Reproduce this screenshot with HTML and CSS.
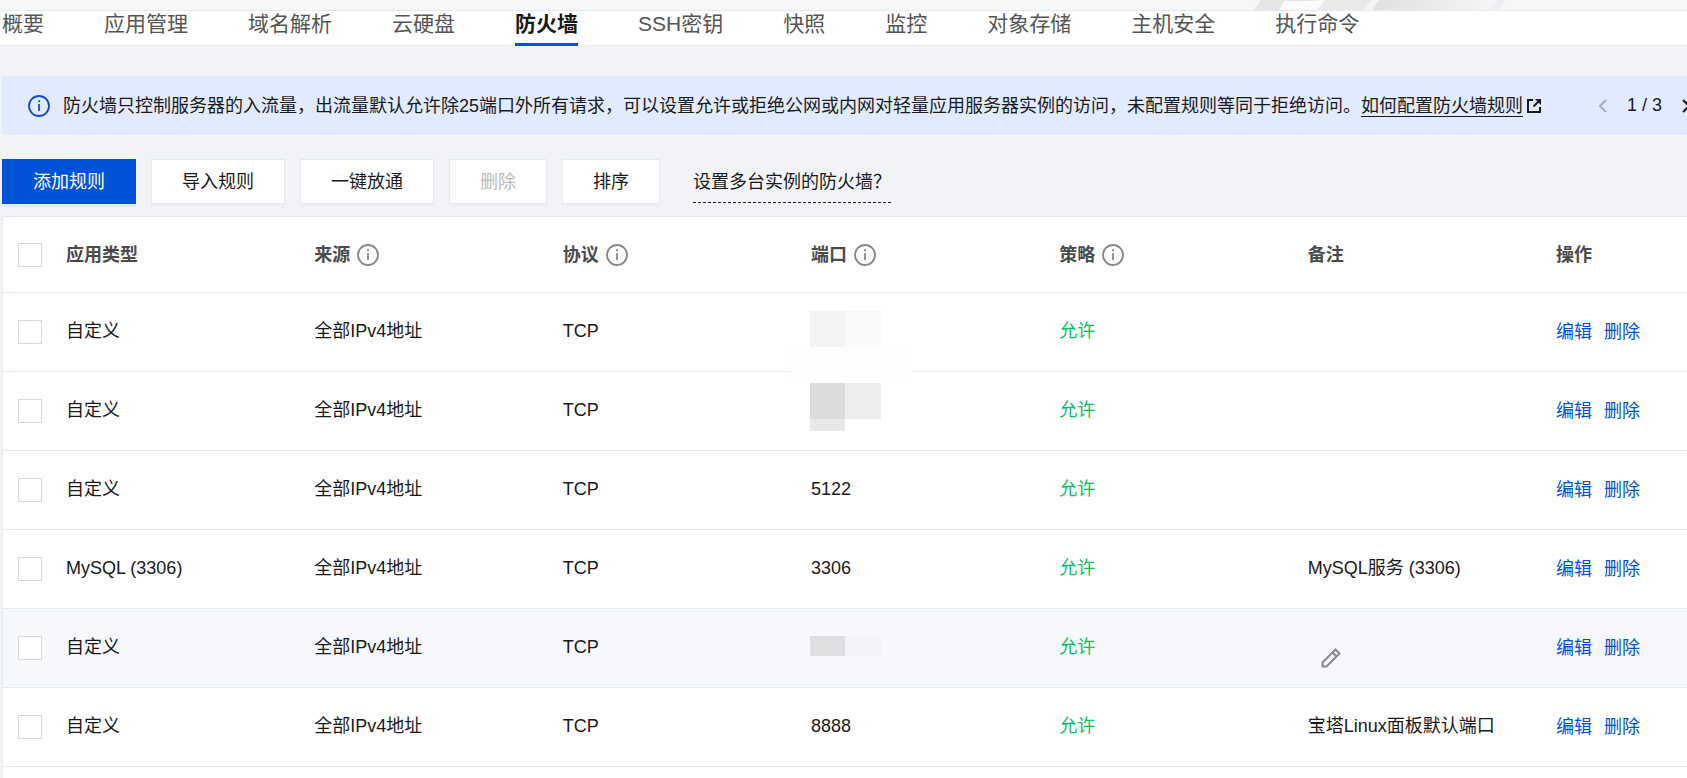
FILE: index.html
```html
<!DOCTYPE html>
<html lang="zh-CN">
<head>
  <meta charset="UTF-8">
  <title>防火墙</title>
  <link rel="stylesheet" href="styles.css">
</head>
<body>

  <svg class="sprite" aria-hidden="true">
    <symbol id="icon-info" viewBox="0 0 22 22">
      <circle cx="11" cy="11" r="10" fill="none" stroke="currentColor" stroke-width="1.8"/>
      <path d="M11 9v7M11 5.2v2" fill="none" stroke="currentColor" stroke-width="1.8"/>
    </symbol>
  </svg>

  <div class="banner">
    <svg class="banner-art" viewBox="0 0 607 10" preserveAspectRatio="none" aria-hidden="true">
      <defs>
        <linearGradient id="fade">
          <stop offset="0" stop-color="#dfe0e2"/>
          <stop offset="1" stop-color="#f5f6f8"/>
        </linearGradient>
      </defs>
      <path d="M181 0h62l-7 10h-62z" fill="#e4e5e7"/>
      <path d="M204 1h20l20-1-6 10h-39z" fill="#fbfbfd"/>
      <path d="M245 0h47l-8 10h-47z" fill="#e9eaec"/>
      <path d="M292 0h7l-7 10h-8z" fill="#f4f5f7"/>
      <path d="M299 0h120l-8 10H292z" fill="url(#fade)"/>
      <path d="M418 0h8l-8 10h-8z" fill="#eeeff2"/>
    </svg>
  </div>

  <nav class="tabs">
    <a class="tab" href="#">概要</a>
    <a class="tab" href="#">应用管理</a>
    <a class="tab" href="#">域名解析</a>
    <a class="tab" href="#">云硬盘</a>
    <a class="tab active" href="#">防火墙</a>
    <a class="tab" href="#">SSH密钥</a>
    <a class="tab" href="#">快照</a>
    <a class="tab" href="#">监控</a>
    <a class="tab" href="#">对象存储</a>
    <a class="tab" href="#">主机安全</a>
    <a class="tab" href="#">执行命令</a>
  </nav>

  <main class="content">
    <!-- Notice -->
    <div class="notice">
      <svg class="icon notice-icon"><use href="#icon-info"/></svg>
      <p class="notice-text">防火墙只控制服务器的入流量，出流量默认允许除25端口外所有请求，可以设置允许或拒绝公网或内网对轻量应用服务器实例的访问，未配置规则等同于拒绝访问。<a class="notice-link" href="#">如何配置防火墙规则</a><svg class="ext-icon" viewBox="0 0 15 15"><path d="M6 2H1v12h12V9" fill="none" stroke="currentColor" stroke-width="2"/><path d="M13 2L6.500 8.500" fill="none" stroke="currentColor" stroke-width="2"/><path d="M8 1h6v6z" fill="currentColor"/></svg></p>
      <div class="pager">
        <button class="pager-btn" aria-label="上一条" disabled><svg viewBox="0 0 8 14"><path d="M7 1L1 7l6 6" fill="none" stroke="currentColor" stroke-width="2"/></svg></button>
        <span>1 / 3</span>
        <button class="pager-btn" aria-label="下一条"><svg viewBox="0 0 8 14"><path d="M1 1l6 6-6 6" fill="none" stroke="currentColor" stroke-width="2"/></svg></button>
      </div>
    </div>

    <!-- Toolbar -->
    <div class="toolbar">
      <button class="btn primary">添加规则</button>
      <button class="btn">导入规则</button>
      <button class="btn">一键放通</button>
      <button class="btn" disabled>删除</button>
      <button class="btn">排序</button>
      <a class="tip-link" href="#">设置多台实例的防火墙？</a>
    </div>

    <!-- Rules -->
    <table class="rules">
      <colgroup>
        <col class="col-check"><col><col><col><col><col><col><col class="col-ops">
      </colgroup>
      <thead>
        <tr>
          <th class="check"><input type="checkbox" aria-label="全选"></th>
          <th>应用类型</th>
          <th>来源<svg class="icon th-icon"><use href="#icon-info"/></svg></th>
          <th>协议<svg class="icon th-icon"><use href="#icon-info"/></svg></th>
          <th>端口<svg class="icon th-icon"><use href="#icon-info"/></svg></th>
          <th>策略<svg class="icon th-icon"><use href="#icon-info"/></svg></th>
          <th>备注</th>
          <th>操作</th>
        </tr>
      </thead>
      <tbody>
        <tr>
          <td class="check"><input type="checkbox" aria-label="选择规则"></td>
          <td>自定义</td>
          <td>全部IPv4地址</td>
          <td>TCP</td>
          <td class="masked">
            <svg class="mask mask-tall" viewBox="0 0 120 120" aria-hidden="true">
              <path d="M0 36h120v36H0z" fill="#fefefe"/>
              <path d="M19 0h35v36H19z" fill="#f3f3f3"/>
              <path d="M54 0h36v36H54z" fill="#f9f9f9"/>
              <path d="M19 72h35v36H19z" fill="#dbdbdb"/>
              <path d="M54 72h36v36H54z" fill="#ecedef"/>
              <path d="M19 108h35v12H19z" fill="#e8e8e8"/>
            </svg>
          </td>
          <td class="allow">允许</td>
          <td></td>
          <td class="ops"><a href="#">编辑</a><a href="#">删除</a></td>
        </tr>
        <tr>
          <td class="check"><input type="checkbox" aria-label="选择规则"></td>
          <td>自定义</td>
          <td>全部IPv4地址</td>
          <td>TCP</td>
          <td></td>
          <td class="allow">允许</td>
          <td></td>
          <td class="ops"><a href="#">编辑</a><a href="#">删除</a></td>
        </tr>
        <tr>
          <td class="check"><input type="checkbox" aria-label="选择规则"></td>
          <td>自定义</td>
          <td>全部IPv4地址</td>
          <td>TCP</td>
          <td>5122</td>
          <td class="allow">允许</td>
          <td></td>
          <td class="ops"><a href="#">编辑</a><a href="#">删除</a></td>
        </tr>
        <tr>
          <td class="check"><input type="checkbox" aria-label="选择规则"></td>
          <td>MySQL (3306)</td>
          <td>全部IPv4地址</td>
          <td>TCP</td>
          <td>3306</td>
          <td class="allow">允许</td>
          <td>MySQL服务 (3306)</td>
          <td class="ops"><a href="#">编辑</a><a href="#">删除</a></td>
        </tr>
        <tr class="hovered">
          <td class="check"><input type="checkbox" aria-label="选择规则"></td>
          <td>自定义</td>
          <td>全部IPv4地址</td>
          <td>TCP</td>
          <td class="masked">
            <svg class="mask mask-short" viewBox="0 0 120 20" aria-hidden="true">
              <path d="M19 0h35v20H19z" fill="#dedfe1"/>
              <path d="M54 0h36v20H54z" fill="#f3f4f8"/>
            </svg>
          </td>
          <td class="allow">允许</td>
          <td><button class="edit-btn" aria-label="编辑备注"><svg viewBox="0 0 20 20"><path d="M1.500 18.500v-4L14.500 1.500l4 4L5.500 18.500zM11.500 4.500l4 4" fill="none" stroke="currentColor" stroke-width="2"/></svg></button></td>
          <td class="ops"><a href="#">编辑</a><a href="#">删除</a></td>
        </tr>
        <tr>
          <td class="check"><input type="checkbox" aria-label="选择规则"></td>
          <td>自定义</td>
          <td>全部IPv4地址</td>
          <td>TCP</td>
          <td>8888</td>
          <td class="allow">允许</td>
          <td>宝塔Linux面板默认端口</td>
          <td class="ops"><a href="#">编辑</a><a href="#">删除</a></td>
        </tr>
      </tbody>
      <tfoot>
        <tr><td class="rules-end" colspan="8"></td></tr>
      </tfoot>
    </table>
  </main>

</body>
</html>
```
FILE: styles.css
```css
* {
  box-sizing: border-box;
}
body {
  margin: 0;
  overflow-x: hidden;
  background: #f2f3f7;
  color: #1a1a1a;
  font: 18px/27px "Liberation Sans", "Noto Sans CJK SC", sans-serif;
}
a {
  color: inherit;
  text-decoration: none;
}
button {
  font: inherit;
  color: inherit;
}
.sprite {
  display: none;
}
.icon {
  width: 22px;
  height: 22px;
}

.banner {
  height: 10px;
  padding-left: 64%;
  background: #f6f7f9;
}
.banner-art {
  display: block;
  width: 100%;
  height: 10px;
}
.tabs {
  display: flex;
  gap: 60px;
  height: 36px;
  padding-left: 2px;
  border-top: 1px solid #e7e8ec;
  border-bottom: 1px solid #e7e8ec;
  background: #fff;
}
.tab {
  height: 35px;
  font-size: 21px;
  line-height: 25px;
  white-space: nowrap;
  color: #555;
}
.tab.active {
  font-weight: bold;
  color: #1a1a1a;
  border-bottom: 3px solid #0052d9;
}

.content {
  padding: 30px 0 0 2px;
}
.notice {
  display: flex;
  align-items: center;
  height: 59px;
  padding-left: 26px;
  background: #e1eaff;
}
.notice-icon {
  flex: none;
  color: #1a4ac8;
}
.notice-text {
  flex: 1;
  margin: 0 0 0 13px;
  padding-top: 2px;
  white-space: nowrap;
}
.notice-link {
  border-bottom: 1px solid #1a1a1a;
}
.ext-icon {
  width: 15px;
  height: 15px;
  margin-left: 4px;
  vertical-align: -1px;
}
.pager {
  display: flex;
  align-items: center;
  gap: 20px;
  margin-right: -3px;
}
.pager-btn {
  padding: 0;
  border: 0;
  background: none;
}
.pager-btn:disabled {
  color: #a8aebc;
}
.pager-btn svg {
  display: block;
  width: 8px;
  height: 14px;
}

.toolbar {
  display: flex;
  gap: 15px;
  margin: 24px 0 12px;
}
.btn {
  height: 45px;
  padding: 2px 30px 0;
  border: 1px solid #e5e8ef;
  background: #fff;
  box-shadow: 0 3px 0 #edeff3;
}
.btn.primary {
  border-color: #0052d9;
  background: #0052d9;
  color: #fff;
  box-shadow: 0 3px 0 #e2eaf5;
}
.btn:disabled {
  color: #bbb;
}
.tip-link {
  height: 44px;
  margin-left: 18px;
  line-height: 46px;
  border-bottom: 1px dashed #1a1a1a;
}

.rules {
  width: 100%;
  table-layout: fixed;
  border-collapse: separate;
  border-spacing: 0;
  border: 1px solid #e5e8ef;
  border-width: 1px 0 0 1px;
  background: #fff;
}
.col-check {
  width: 48px;
}
.col-ops {
  width: 146px;
}
.rules th,
.rules td {
  height: 79px;
  padding: 0 0 1px 15px;
  border-bottom: 1px solid #e5e8ef;
  text-align: left;
  white-space: nowrap;
}
.rules th {
  height: 76px;
  padding: 2px 0 0 15px;
  color: #4b4b4b;
}
.rules td.check,
.rules td.ops {
  padding-bottom: 0;
}
.rules th.check {
  padding-top: 0;
}
.rules .rules-end {
  height: 11px;
  border-bottom: 0;
}
.rules input {
  display: block;
  appearance: none;
  width: 24px;
  height: 24px;
  margin: 0;
  border: 1px solid #d5d9e2;
  background: #fff;
}
.th-icon {
  margin-left: 7px;
  vertical-align: -5px;
  color: #888;
}
.hovered {
  background: #f6f8fc;
}
.allow {
  color: #0abf5b;
}
.ops a {
  margin-right: 12px;
  color: #0052d9;
}

/* hidden port numbers */
.masked {
  position: relative;
}
.mask {
  position: absolute;
  left: -5px;
  width: 120px;
}
.mask-tall {
  top: 18px;
  height: 120px;
}
.mask-short {
  top: 27px;
  height: 20px;
}
.edit-btn {
  display: block;
  padding: 20px 0 0 13px;
  border: 0;
  background: none;
  color: #888;
}
.edit-btn svg {
  display: block;
  width: 20px;
  height: 20px;
}
```
